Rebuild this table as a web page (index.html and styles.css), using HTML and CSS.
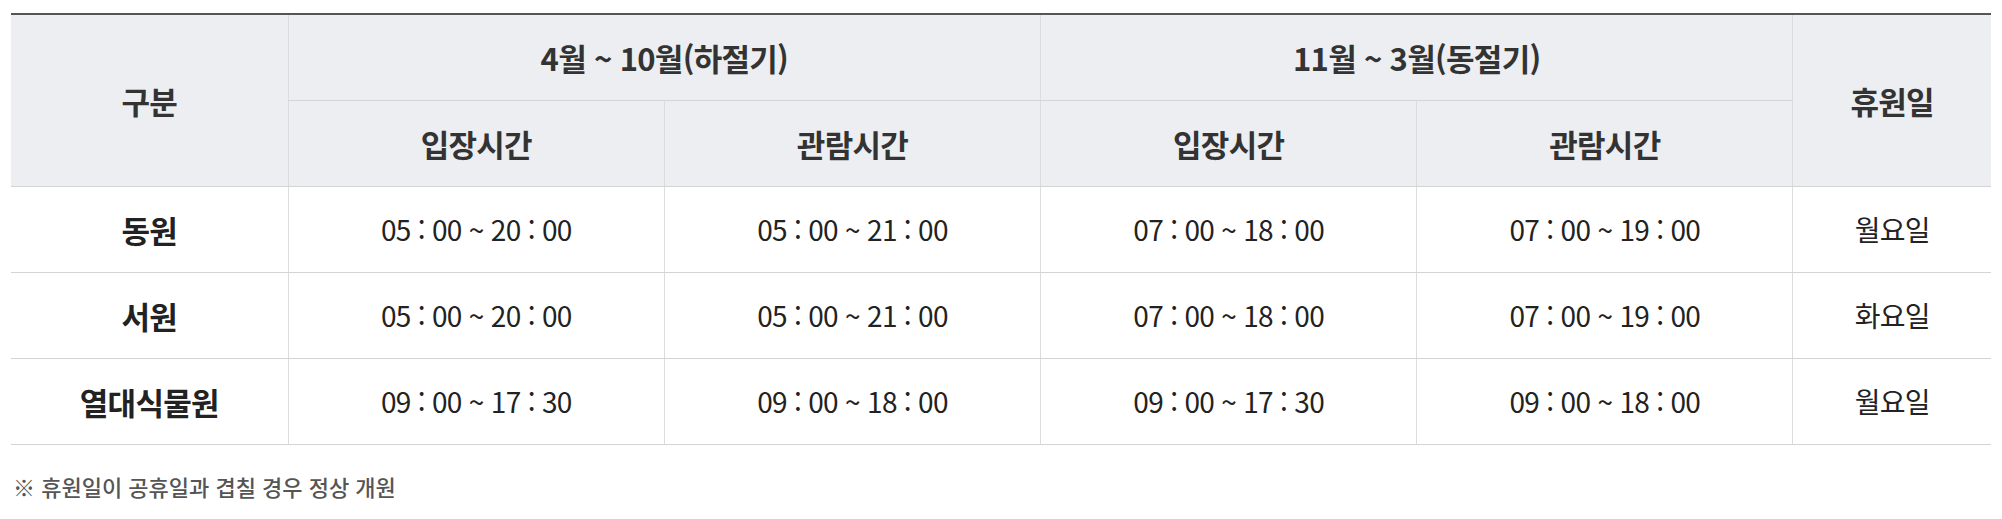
FILE: index.html
```html
<!DOCTYPE html>
<html lang="ko">
<head>
<meta charset="utf-8">
<title>관람시간</title>
<link rel="stylesheet" href="styles.css">
</head>
<body>
<div class="wrap">
  <table class="hours">
    <colgroup>
      <col class="c-name">
      <col class="c-time">
      <col class="c-time">
      <col class="c-time">
      <col class="c-time">
      <col class="c-off">
    </colgroup>
    <thead>
      <tr>
        <th rowspan="2">구분</th>
        <th colspan="2">4월 ~ 10월(하절기)</th>
        <th colspan="2">11월 ~ 3월(동절기)</th>
        <th rowspan="2">휴원일</th>
      </tr>
      <tr>
        <th>입장시간</th>
        <th>관람시간</th>
        <th>입장시간</th>
        <th>관람시간</th>
      </tr>
    </thead>
    <tbody>
      <tr>
        <th>동원</th>
        <td>05 : 00 ~ 20 : 00</td>
        <td>05 : 00 ~ 21 : 00</td>
        <td>07 : 00 ~ 18 : 00</td>
        <td>07 : 00 ~ 19 : 00</td>
        <td>월요일</td>
      </tr>
      <tr>
        <th>서원</th>
        <td>05 : 00 ~ 20 : 00</td>
        <td>05 : 00 ~ 21 : 00</td>
        <td>07 : 00 ~ 18 : 00</td>
        <td>07 : 00 ~ 19 : 00</td>
        <td>화요일</td>
      </tr>
      <tr>
        <th>열대식물원</th>
        <td>09 : 00 ~ 17 : 30</td>
        <td>09 : 00 ~ 18 : 00</td>
        <td>09 : 00 ~ 17 : 30</td>
        <td>09 : 00 ~ 18 : 00</td>
        <td>월요일</td>
      </tr>
    </tbody>
  </table>
  <p class="note">※ 휴원일이 공휴일과 겹칠 경우 정상 개원</p>
</div>
</body>
</html>
```

FILE: styles.css
```css
html, body {
  margin: 0;
  padding: 0;
  background: #ffffff;
}

body {
  font-family: "Noto Sans CJK KR", "Noto Sans", sans-serif;
  color: #222222;
}

.wrap {
  padding: 13px 11px 0 11px;
}

.hours {
  width: 100%;
  table-layout: fixed;
  border-collapse: collapse;
  border-top: 2px solid #555555;
  font-size: 28px;
  letter-spacing: -0.025em;
}

.c-name { width: 14%; }
.c-time { width: 19%; }
.c-off { width: 10%; }

.hours th,
.hours td {
  height: 85px;
  padding: 0;
  text-align: center;
  vertical-align: middle;
  border-bottom: 1px solid #d4d4d4;
  border-left: 1px solid #dcdcdc;
  line-height: 1.2;
}

.hours tr > :first-child {
  border-left: none;
}

.hours thead tr:last-child th:first-child {
  border-left: 1px solid #dcdcdc;
}

.hours thead th {
  background: #eceef1;
  color: #333333;
  font-weight: 700;
  font-size: 31px;
}

.hours tbody th {
  font-weight: 700;
  font-size: 31px;
  color: #222222;
}

.hours tbody td {
  font-weight: 400;
  color: #222222;
}

.note {
  margin: 25px 0 0 2px;
  font-size: 22px;
  font-weight: 500;
  color: #555555;
}
```
